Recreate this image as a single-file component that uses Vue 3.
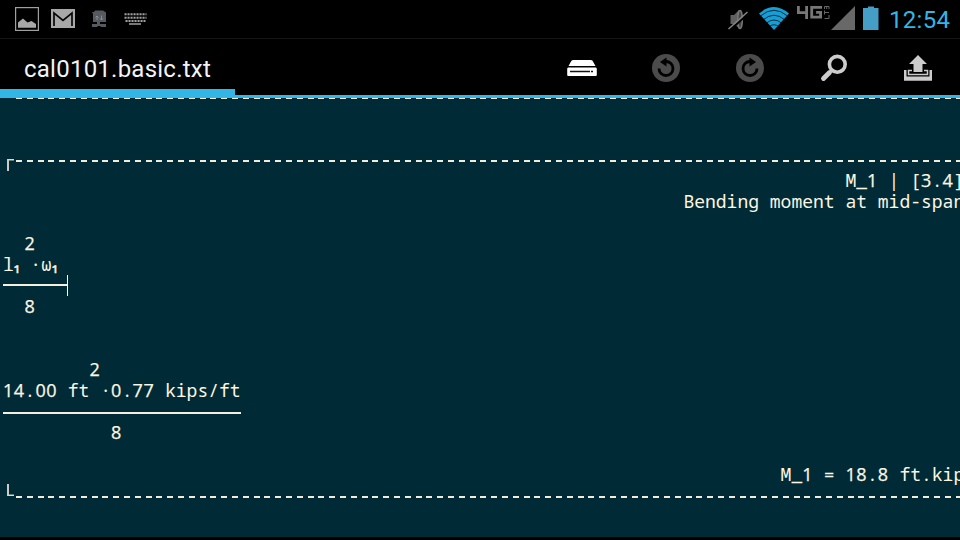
<script setup>
const lines = [
  { dashed: true },
  { text: '' },
  { text: '' },
  { dashed: true, corner: 'top' },
  { col: 78, text: 'M_1 | [3.4]' },
  { col: 63, text: 'Bending moment at mid-span' },
  { text: '' },
  { col: 2, text: '2' },
  { text: 'l₁ ·ω₁' },
  { rule: 6, cursor: true },
  { col: 2, text: '8' },
  { text: '' },
  { text: '' },
  { col: 8, text: '2' },
  { text: '14.00 ft ·0.77 kips/ft' },
  { rule: 22 },
  { col: 10, text: '8' },
  { text: '' },
  { col: 72, text: 'M_1 = 18.8 ft.kips' },
  { dashed: true, corner: 'bottom' },
]

const runs = (text) => text.split(/(\d+|₁)/).filter(Boolean)
const kind = (run) => (run === '₁' ? 'sub' : /\d/.test(run) ? 'digits' : '')
</script>

<template>
  <div class="screen">
    <header class="status">
      <svg class="notes" width="160" height="38" viewBox="0 0 160 38">
        <rect x="15.600" y="7.600" width="22.800" height="22.800" fill="none" stroke="#a0a0a0" stroke-width="1.200" />
        <path d="M18 27.800v-5.300l5-4 4.500 4 4-1.500 4.500 3v3.800z" fill="#a8a8a8" />
        <rect x="51" y="9" width="24" height="19" fill="#a8a8a8" />
        <path d="M54 26V13l9 7.500 9-7.500v13" fill="none" stroke="#080808" stroke-width="1.700" />
        <path d="M95 10.500h8l3 2v9.500h-6v2h6v3h-5l-1-1h-2l-1 1h-5v-3h5v-2H93v-8l-1-2h2z" fill="#555a60" />
        <path d="M97 20v-4m-1.500 1.500L97 16l1.500 1.500M101.500 15.500v4.500m-1.500-1.500 1.500 1.500 1.500-1.500" fill="none" stroke="#8a8f95" />
        <path d="M124.500 14.200h22M124.500 17.700h22M125.500 21h20" stroke="#a0a0a0" stroke-width="2" stroke-dasharray="2.100 .9" />
        <path d="M129 24h12" stroke="#a0a0a0" stroke-width="1.500" />
      </svg>
      <div class="spacer"></div>
      <svg width="160" height="38" viewBox="724 0 160 38">
        <path d="M730.500 15h3.500l5-5v18l-5-4h-3.500z" fill="#606060" />
        <ellipse cx="740" cy="19.500" rx="2.300" ry="9" fill="#444" stroke="#777" stroke-width="1.500" />
        <path d="M730 30 748 14" stroke="#000" stroke-width="2" />
        <path d="M728.500 29 747.500 12" stroke="#858585" stroke-width="1.500" />
        <path d="M759 13.500Q774 .5 789 13.500L774 30z" fill="#179fd5" />
        <path d="M760.500 16q13.500-11.500 27 0M763.500 19.500q10.500-8.500 21 0M766.500 23q7.500-6 15 0M769.500 26.500q4.500-3.500 9 0" fill="none" stroke="#001019" stroke-width=".8" />
        <path d="M798.400 6v6.600h9.500M806.600 6v13M822 7.400h-10.300v9.800h8.900v-4.800h-4.500" fill="none" stroke="#777" stroke-width="2.800" />
        <path d="M829 18.500h-4.500M829 18.500v-3.500M829 12.500h-5M824.500 10.500v4M824.500 9V6.500h4.500V9M826.700 6.500V9" fill="none" stroke="#666" />
        <path d="M831 30 855 6v24z" fill="#686868" />
        <path d="M863 8h5V6.500h6V8h4.500v22H863z" fill="#449ec5" />
      </svg>
      <time>12:54</time>
    </header>
    <nav class="bar">
      <h1>cal0101.basic.txt</h1>
      <div class="actions">
        <svg viewBox="0 0 36 36">
          <path d="M9 10h18q1.500 0 2 1.500L31.500 16H4.500l2.500-4.500Q7.500 10 9 10z" fill="#fff" />
          <path d="M4 17.500h28l.8 1V25q0 1-1 1H4.200q-1 0-1-1v-6.500z" fill="#fff" />
          <path d="M6 21.500h20M27 21.500h2" stroke="#111" stroke-width="1.300" />
        </svg>
        <svg v-for="flip in [false, true]" :key="flip" viewBox="0 0 36 36" :class="{ flip }">
          <circle cx="18" cy="18" r="14" fill="#4b4b4b" />
          <path d="M18 11.500A7 7 0 1 1 11 18.500" fill="none" stroke="#000" stroke-width="2.800" />
          <path d="M12 12 18.500 7.500v9z" fill="#000" />
        </svg>
        <svg viewBox="0 0 36 36">
          <circle cx="21.300" cy="14.300" r="7.900" fill="none" stroke="#ccc" stroke-width="3.600" />
          <path d="M13.500 22.500 7.500 28.500" stroke="#ccc" stroke-width="4.800" stroke-linecap="round" />
        </svg>
        <svg viewBox="0 0 36 36">
          <path d="M18 5 27 14h-4.500v8h-9v-8H9z" fill="#ccc" />
          <path d="M4 20h2.500v6.500h23V20H32v10.700H4z" fill="#ccc" />
          <path d="M12 20.500H8.500V24.500h19V20.500H24" fill="none" stroke="#ccc" stroke-width="1.500" />
        </svg>
      </div>
    </nav>
    <div class="strip"><div class="tab"></div></div>
    <main class="editor">
      <div v-for="(line, i) in lines" :key="i" class="line" :style="line.col ? { paddingLeft: line.col * 10.8 + 'px' } : null">
        <template v-if="line.dashed">
          <span class="corner" :class="line.corner"></span><span class="dashes"></span>
        </template>
        <template v-else-if="line.rule">
          <span class="rule" :class="{ active: line.cursor }" :style="{ width: line.rule * 10.8 + 'px' }"></span><span v-if="line.cursor" class="cursor"></span>
        </template>
        <span v-else><span v-for="(run, r) in runs(line.text)" :key="r" :class="kind(run)">{{ run }}</span></span>
      </div>
    </main>
    <footer></footer>
  </div>
</template>

<style>
body { margin: 0; background: #000; }
</style>

<style scoped>
.screen { width: 960px; height: 540px; overflow: hidden; display: flex; flex-direction: column; background: #000; font-family: Roboto, sans-serif; }
.status { height: 38px; flex: none; display: flex; border-bottom: 1px solid #141414; }
.spacer { flex: 1; }
time { width: 76px; padding-left: 5px; box-sizing: border-box; color: #33b5e5; font-size: 24px; line-height: 40px; letter-spacing: .3px; }
.bar { height: 50px; flex: none; display: flex; justify-content: space-between; padding: 0 24px; }
h1 { margin: 0; font-size: 24px; font-weight: 400; line-height: 60px; letter-spacing: .24px; color: #f3f3f3; }
.actions { display: flex; gap: 48px; padding-top: 11px; }
.actions svg { width: 36px; height: 36px; }
.flip { transform: scaleX(-1); }
.strip { height: 9px; flex: none; box-sizing: border-box; border-bottom: 3px solid #33b5e5; }
.tab { width: 235px; height: 6px; background: #33b5e5; }
.editor { flex: 1; min-height: 0; overflow: hidden; background: #002b36; color: #fdf6e3; padding-left: 3px; font: 18px/21px "Droid Sans Mono", "Noto Sans Mono", "DejaVu Sans Mono", monospace; }
.line { height: 21px; display: flex; white-space: pre; }
.line:first-child { margin-top: -12px; }
.digits { font-family: "Open Sans", sans-serif; letter-spacing: .5px; line-height: 1; -webkit-text-stroke: .25px #fdf6e3; }
.sub { display: inline-block; width: 5.6px; font-family: "Open Sans", sans-serif; line-height: 1; -webkit-text-stroke: .5px #fdf6e3; }
.corner { width: 7px; height: 12px; margin-left: 4px; box-sizing: border-box; flex: none; }
.corner.top { margin-top: 10px; border-left: 2px solid #c9cdc0; border-top: 1px solid #ddddcf; box-shadow: inset 0 1px #6b807d; }
.corner.bottom { margin-top: -1px; border-left: 2px solid #c9cdc0; border-bottom: 1px solid #ddddcf; box-shadow: inset 0 -1px #6b807d; }
.dashes { flex: 1; height: 2px; margin: 11px 0 0 2px; background: repeating-linear-gradient(90deg, #f2ecda 0 6px, transparent 6px 10.8px); }
.rule { height: 2px; margin-top: 11px; background: #f5efdd; }
.rule.active { margin-top: 9px; }
.cursor { width: 1px; height: 21px; margin-left: -1px; background: #fff; }
footer { height: 3px; flex: none; background: #000; }
</style>
